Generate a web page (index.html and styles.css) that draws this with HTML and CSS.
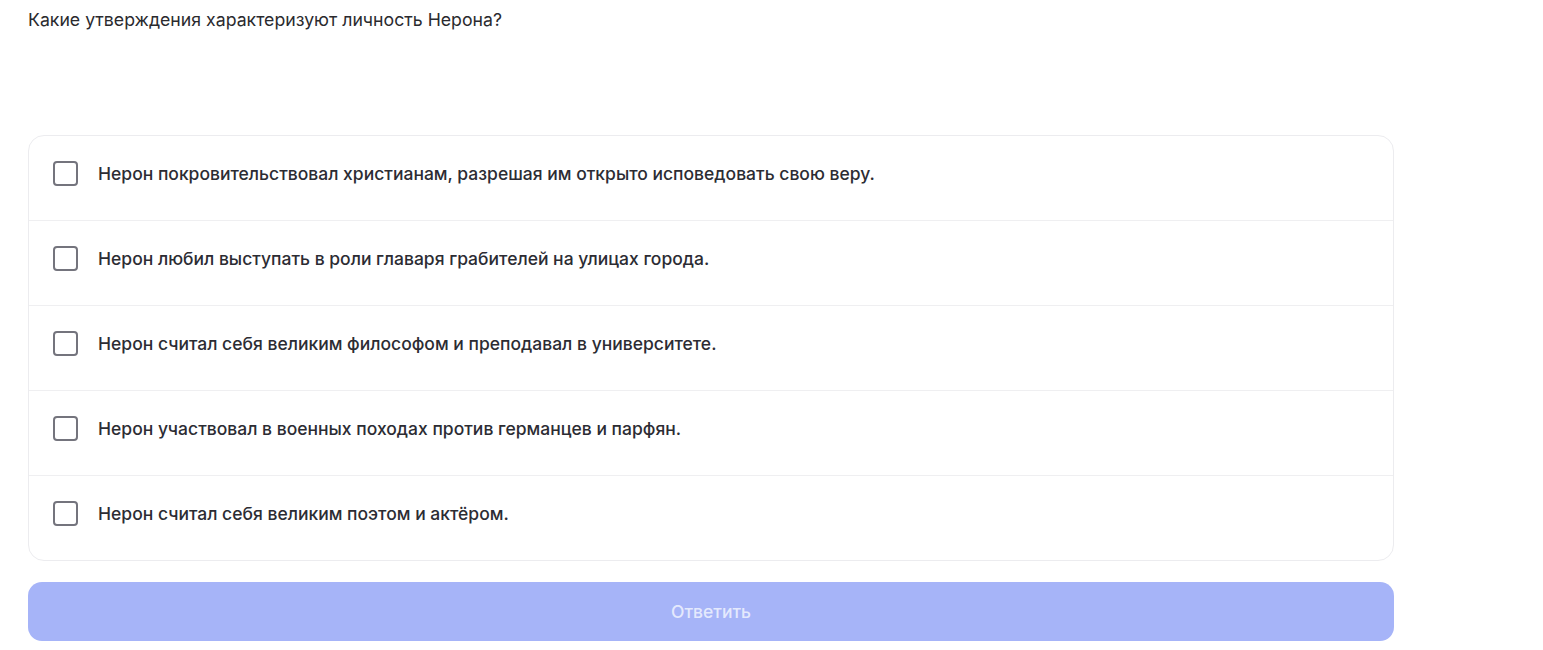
FILE: index.html
```html
<!DOCTYPE html>
<html lang="ru">
<head>
  <meta charset="UTF-8" />
  <meta name="viewport" content="width=device-width, initial-scale=1.0" />
  <title>Вопрос</title>
  <link rel="stylesheet" href="styles.css">
</head>
<body>
  <div class="quiz">
    <div class="question">Какие утверждения характеризуют личность Нерона?</div>

    <div class="options">
      <label class="option"><span class="box"></span><span class="text">Нерон покровительствовал христианам, разрешая им открыто исповедовать свою веру.</span></label>
      <label class="option"><span class="box"></span><span class="text">Нерон любил выступать в роли главаря грабителей на улицах города.</span></label>
      <label class="option"><span class="box"></span><span class="text">Нерон считал себя великим философом и преподавал в университете.</span></label>
      <label class="option"><span class="box"></span><span class="text">Нерон участвовал в военных походах против германцев и парфян.</span></label>
      <label class="option"><span class="box"></span><span class="text">Нерон считал себя великим поэтом и актёром.</span></label>
    </div>

    <button class="submit" disabled>Ответить</button>
  </div>
</body>
</html>
```

FILE: styles.css
```css
body {
  margin: 0;
  font-family: Inter, "Noto Sans", sans-serif;
  color: #222;
  background: #fff;
}

.quiz {
  width: 1366px;
  padding: 9px 0 0 28px;
}

.question {
  font-size: 17.7px;
  line-height: 22px;
  color: #2a2a2e;
  margin-bottom: 104px;
}

.options {
  border: 1px solid #ececef;
  border-radius: 16px;
  overflow: hidden;
}

.option {
  box-sizing: border-box;
  display: flex;
  align-items: center;
  height: 85px;
  padding: 0 24px 9px;
  border-top: 1px solid #efeff1;
  cursor: pointer;
}

.option:first-child {
  border-top: none;
  height: 84px;
}

.box {
  width: 21px;
  height: 21px;
  border: 2px solid #74747d;
  border-radius: 4px;
  flex-shrink: 0;
  margin-right: 20px;
}

.text {
  font-size: 17.5px;
  font-weight: 500;
  color: #2c2c33;
}

.submit {
  display: block;
  width: 100%;
  height: 59px;
  margin-top: 21px;
  border: none;
  border-radius: 14px;
  background: #a6b4f8;
  color: #e4e9fd;
  font-family: inherit;
  font-size: 17.5px;
  font-weight: 500;
}
```
